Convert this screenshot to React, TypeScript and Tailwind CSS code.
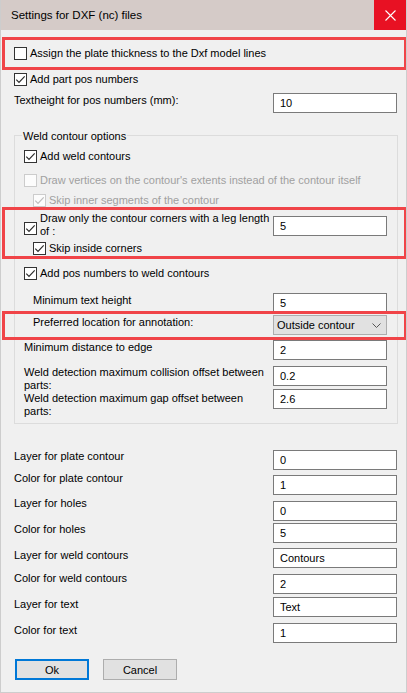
import clsx from 'clsx';

function Box({ checked, disabled }: { checked?: boolean; disabled?: boolean }) {
  return (
    <span
      className={clsx(
        'mt-[1px] flex h-[13px] w-[13px] shrink-0 items-center justify-center border',
        disabled ? 'border-[#cccccc] bg-[#fcfcfc]' : 'border-[#333333] bg-white'
      )}
    >
      {checked && (
        <svg width="11" height="11" viewBox="0 0 11 11">
          <path
            d="M1.3 5.6 L4 8.3 L9.7 2.4"
            fill="none"
            stroke={disabled ? '#bdbdbd' : '#2b2b2b'}
            strokeWidth="1.2"
          />
        </svg>
      )}
    </span>
  );
}

function Field({ value, wide }: { value: string; wide?: boolean }) {
  return (
    <div
      className={clsx(
        'flex h-[20px] shrink-0 items-center border border-[#7a7a7a] bg-white pl-[6px]',
        wide ? 'w-[124px]' : 'w-[114px]'
      )}
    >
      {value}
    </div>
  );
}

export default function App() {
  return (
    <div className="relative h-[693px] w-[407px] overflow-hidden border-x border-b border-[#cdcdcd] bg-[#f0f0f0] font-['Liberation_Sans',Arial,sans-serif] text-[11px] leading-[14px] text-black">
      {/* Title bar */}
      <div className="flex h-[30px] items-center justify-between bg-[#d5cbc8]">
        <span className="pl-[10px] text-[11.5px]">Settings for DXF (nc) files</span>
        <div className="flex h-[30px] w-[32px] items-center justify-center bg-[#e81123]">
          <svg width="11" height="11" viewBox="0 0 11 11">
            <path d="M0.5 0.5 L10.5 10.5 M10.5 0.5 L0.5 10.5" stroke="white" strokeWidth="1.1" />
          </svg>
        </div>
      </div>

      <div className="flex flex-col pt-[16px]">
        <div className="flex h-[26px] items-start pl-[13px]">
          <Box />
          <span className="ml-[3px]">Assign the plate thickness to the Dxf model lines</span>
        </div>
        <div className="flex h-[21px] items-start pl-[13px]">
          <Box checked />
          <span className="ml-[3px]">Add part pos numbers</span>
        </div>
        <div className="flex h-[42px] items-start pl-[13px]">
          <span className="w-[259px]">Textheight for pos numbers (mm):</span>
          <Field value="10" wide />
        </div>

        {/* Weld contour options */}
        <div className="relative ml-[13px] flex h-[289px] w-[384px] flex-col border border-[#dcdcdc] pt-[13px]">
          <span className="absolute -top-[7px] left-[7px] bg-[#f0f0f0] px-[1px]">Weld contour options</span>
          <div className="flex h-[24px] items-start pl-[9px]">
            <Box checked />
            <span className="ml-[3px]">Add weld contours</span>
          </div>
          <div className="flex h-[20px] items-start pl-[9px] text-[#a0a0a0]">
            <Box disabled />
            <span className="ml-[3px] whitespace-nowrap">Draw vertices on the contour's extents instead of the contour itself</span>
          </div>
          <div className="flex h-[19px] items-start pl-[18px] text-[#a0a0a0]">
            <Box checked disabled />
            <span className="ml-[3px]">Skip inner segments of the contour</span>
          </div>
          <div className="flex h-[29px] items-start pl-[9px]">
            <span className="mt-[9px] flex">
              <Box checked />
            </span>
            <span className="ml-[3px] w-[233px] whitespace-nowrap leading-[13px]">
              Draw only the contour corners with a leg length
              <br />
              of :
            </span>
            <div className="mt-[4px]">
              <Field value="5" />
            </div>
          </div>
          <div className="flex h-[25px] items-start pl-[18px]">
            <Box checked />
            <span className="ml-[3px]">Skip inside corners</span>
          </div>
          <div className="flex h-[27px] items-start pl-[9px]">
            <Box checked />
            <span className="ml-[3px]">Add pos numbers to weld contours</span>
          </div>
          <div className="flex h-[22px] items-start pl-[18px]">
            <span className="w-[240px]">Minimum text height</span>
            <Field value="5" />
          </div>
          <div className="flex h-[25px] items-start pl-[18px]">
            <span className="w-[240px]">Preferred location for annotation:</span>
            <div className="flex h-[20px] w-[114px] items-center justify-between border border-[#adadad] bg-[#e1e1e1] pl-[3px] pr-[5px]">
              <span>Outside contour</span>
              <svg width="9" height="5" viewBox="0 0 9 5">
                <path d="M0.5 0.5 L4.5 4.5 L8.5 0.5" fill="none" stroke="#555" strokeWidth="1" />
              </svg>
            </div>
          </div>
          <div className="flex h-[26px] items-start pl-[9px]">
            <span className="w-[249px]">Minimum distance to edge</span>
            <Field value="2" />
          </div>
          <div className="flex h-[23px] items-start pl-[9px]">
            <span className="w-[249px] whitespace-nowrap leading-[13px]">
              Weld detection maximum collision offset between
              <br />
              parts:
            </span>
            <Field value="0.2" />
          </div>
          <div className="flex items-start pl-[9px]">
            <span className="mt-[3px] w-[249px] whitespace-nowrap leading-[13px]">
              Weld detection maximum gap offset between
              <br />
              parts:
            </span>
            <Field value="2.6" />
          </div>
        </div>

        <div className="mt-[25px] flex h-[22px] items-start pl-[13px]">
          <span className="w-[259px]">Layer for plate contour</span>
          <div className="mt-[1px]">
            <Field value="0" wide />
          </div>
        </div>
        <div className="flex h-[25px] items-start pl-[13px]">
          <span className="w-[259px]">Color for plate contour</span>
          <div className="mt-[4px]">
            <Field value="1" wide />
          </div>
        </div>
        <div className="flex h-[26px] items-start pl-[13px]">
          <span className="w-[259px]">Layer for holes</span>
          <div className="mt-[5px]">
            <Field value="0" wide />
          </div>
        </div>
        <div className="flex h-[26px] items-start pl-[13px]">
          <span className="w-[259px]">Color for holes</span>
          <div className="mt-[1px]">
            <Field value="5" wide />
          </div>
        </div>
        <div className="flex h-[23px] items-start pl-[13px]">
          <span className="w-[259px]">Layer for weld contours</span>
          <Field value="Contours" wide />
        </div>
        <div className="flex h-[26px] items-start pl-[13px]">
          <span className="w-[259px]">Color for weld contours</span>
          <div className="mt-[3px]">
            <Field value="2" wide />
          </div>
        </div>
        <div className="flex h-[26px] items-start pl-[13px]">
          <span className="w-[259px]">Layer for text</span>
          <Field value="Text" wide />
        </div>
        <div className="flex h-[36px] items-start pl-[13px]">
          <span className="w-[259px]">Color for text</span>
          <Field value="1" wide />
        </div>

        <div className="flex gap-[14px] pl-[14px]">
          <button className="flex h-[21px] w-[74px] items-center justify-center border-2 border-[#0078d7] bg-[#e1e1e1]">
            Ok
          </button>
          <button className="flex h-[21px] w-[74px] items-center justify-center border border-[#adadad] bg-[#e1e1e1]">
            Cancel
          </button>
        </div>
      </div>

      {/* Red highlight annotations */}
      <div className="pointer-events-none absolute left-[1px] top-[37px] h-[33px] w-[405px] border-[3px] border-[#f04448]" />
      <div className="pointer-events-none absolute left-[1px] top-[207px] h-[52px] w-[405px] border-[3px] border-[#f04448]" />
      <div className="pointer-events-none absolute left-[1px] top-[311px] h-[29px] w-[405px] border-[3px] border-[#f04448]" />
    </div>
  );
}
